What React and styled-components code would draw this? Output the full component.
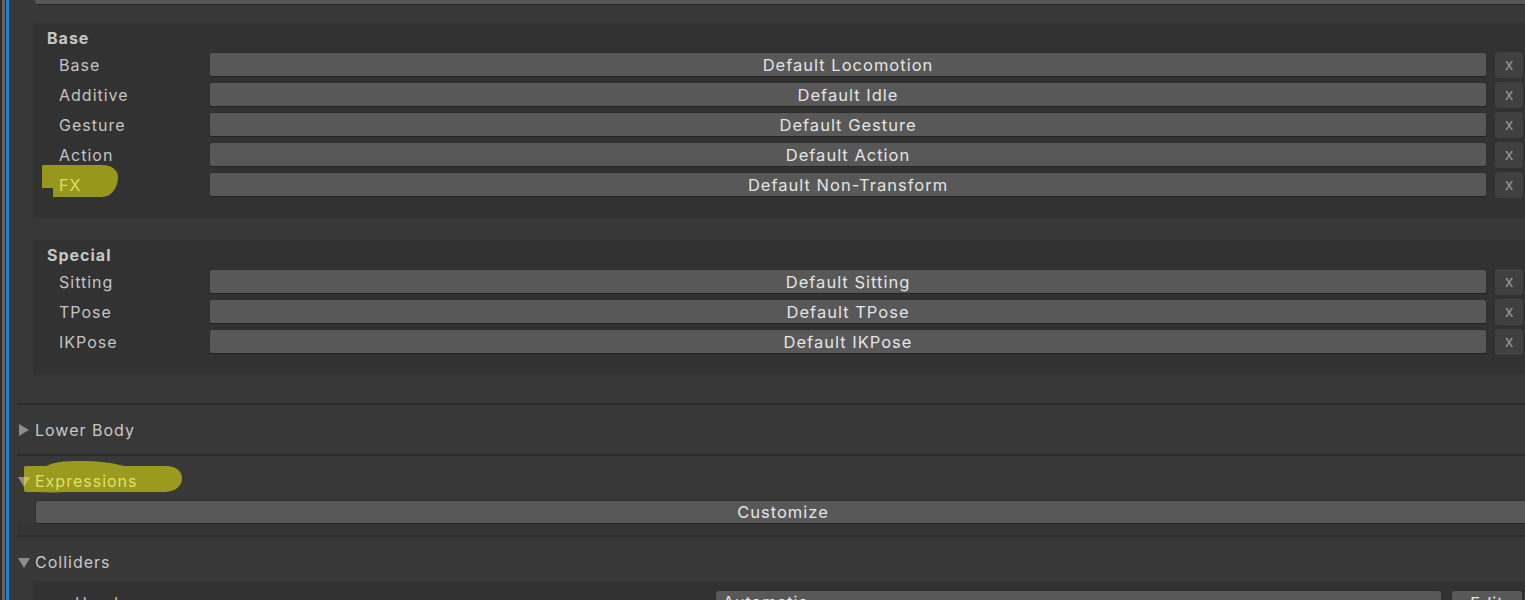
import React from "react";
import styled, { createGlobalStyle } from "styled-components";

const baseLayers = [
	{ label: "Base", value: "Default Locomotion" },
	{ label: "Additive", value: "Default Idle" },
	{ label: "Gesture", value: "Default Gesture" },
	{ label: "Action", value: "Default Action" },
	{ label: "FX", value: "Default Non-Transform", marked: true },
];

const specialLayers = [
	{ label: "Sitting", value: "Default Sitting" },
	{ label: "TPose", value: "Default TPose" },
	{ label: "IKPose", value: "Default IKPose" },
];

const Triangle = ({ open }) => (
	<Arrow viewBox="0 0 12 14" aria-hidden="true">
		{open ? (
			<polygon points="0,3 12,3 6,13" />
		) : (
			<polygon points="1,1 11,7 1,13" />
		)}
	</Arrow>
);

const LayerGroup = ({ title, layers }) => (
	<Group>
		<GroupTitle>{title}</GroupTitle>
		<Rows>
			{layers.map((layer) => (
				<LayerRow key={layer.label}>
					<LayerLabel>
						{layer.label}
						{layer.marked && (
							<Marker
								viewBox="0 0 76 32"
								style={{ left: -17, top: -10, width: 76, height: 32 }}
							>
								<path d="M0 1 Q0 0 2 0 H60 C70 0 76 5 76 12 C76 22 70 32 60 32 H11 V23 H0 Z" />
							</Marker>
						)}
					</LayerLabel>
					<FieldButton>{layer.value}</FieldButton>
					<ClearButton>x</ClearButton>
				</LayerRow>
			))}
		</Rows>
	</Group>
);

const App = () => {
	return (
		<>
			<GlobalStyle />
			<Window>
				<Edge />
				<Accent />
				<Inspector>
					<TopField />
					<LayerGroup title="Base" layers={baseLayers} />
					<LayerGroup title="Special" layers={specialLayers} />

					<Foldout $first>
						<FoldoutHeader>
							<Triangle />
							<span>Lower Body</span>
						</FoldoutHeader>
					</Foldout>

					<Foldout>
						<FoldoutHeader>
							<Triangle open />
							<span>Expressions</span>
							<Marker
								viewBox="0 0 158 32"
								style={{ left: 7, top: -10, width: 158, height: 32 }}
							>
								<path d="M0 6 Q0 5 4 5 H22 C30 1 40 0 55 0 C75 0 90 2 100 5 H142 C152 5 158 10 158 17 C158 26 150 31 140 31 H40 C30 32 20 31 10 31 H2 Q0 31 0 29 Z" />
							</Marker>
						</FoldoutHeader>
						<FoldoutBody>
							<WideButton>Customize</WideButton>
						</FoldoutBody>
					</Foldout>

					<Foldout>
						<FoldoutHeader>
							<Triangle open />
							<span>Colliders</span>
						</FoldoutHeader>
						<ColliderBox>
							<ColliderRow>
								<ColliderLabel>Head</ColliderLabel>
								<Dropdown>Automatic</Dropdown>
								<EditButton>Edit</EditButton>
							</ColliderRow>
						</ColliderBox>
					</Foldout>
				</Inspector>
			</Window>
		</>
	);
};

export default App;

const GlobalStyle = createGlobalStyle`
	html, body {
		margin: 0;
		padding: 0;
		background: #383838;
	}

	body {
		font-family: Inter, "Noto Sans", sans-serif;
		overflow: hidden;
	}
`;

const Window = styled.div`
	display: flex;
	align-items: flex-start;
	width: 1525px;
	height: 600px;
	overflow: hidden;
	background: #383838;
`;

const Edge = styled.div`
	flex: none;
	align-self: stretch;
	width: 6px;
	background: linear-gradient(
		to right,
		#2d2d2d 0 2px,
		#6a625a 2px 5px,
		#2d2d2d 5px 6px
	);
`;

const Accent = styled.div`
	flex: none;
	align-self: stretch;
	width: 3px;
	background: #1b84d4;
`;

const Inspector = styled.div`
	flex: none;
	width: 1522px;
`;

const TopField = styled.div`
	height: 4px;
	margin-left: 26px;
	background: #585858;
	border-bottom: 1px solid #262626;
	border-radius: 0 0 3px 3px;
`;

const Group = styled.section`
	margin: 18px 0 0 24px;
	padding: 5px 8px 21px 14px;
	background: #323232;

	& + & {
		margin-top: 22px;
	}
`;

const GroupTitle = styled.h4`
	margin: 0 0 4px;
	height: 20px;
	line-height: 20px;
	font-size: 16px;
	font-weight: 700;
	letter-spacing: 1px;
	color: #c6c6c6;
`;

const Rows = styled.div`
	display: flex;
	flex-direction: column;
	gap: 5px;
	padding-left: 12px;
`;

const LayerRow = styled.div`
	display: flex;
	align-items: center;
	height: 25px;
`;

const LayerLabel = styled.span`
	position: relative;
	flex: none;
	width: 150px;
	font-size: 16px;
	letter-spacing: 1px;
	color: #c4c4c4;
`;

const Marker = styled.svg`
	position: absolute;
	z-index: 2;
	pointer-events: none;
	fill: rgba(252, 252, 4, 0.5);
`;

const FieldButton = styled.button`
	flex: 1;
	height: 25px;
	padding: 0;
	box-sizing: border-box;
	background: #585858;
	border: 1px solid #2e2e2e;
	border-bottom-color: #232323;
	border-radius: 3px;
	font-family: inherit;
	font-size: 16.5px;
	letter-spacing: 1px;
	color: #e4e4e4;
`;

const ClearButton = styled.button`
	flex: none;
	width: 28px;
	height: 26px;
	margin-left: 8px;
	padding: 0 0 2px;
	background: #404040;
	border: none;
	border-radius: 3px;
	font-family: inherit;
	font-size: 16px;
	color: #999999;
`;

const Foldout = styled.div`
	position: relative;
	margin-left: 8px;
	border-top: 2px solid #2c2c2c;
	margin-top: ${(p) => (p.$first ? "28px" : "0")};
	padding-top: 15px;
`;

const FoldoutHeader = styled.div`
	position: relative;
	display: flex;
	align-items: center;
	gap: 5px;
	height: 20px;
	padding-left: 1px;
	padding-bottom: 14px;
	font-size: 16px;
	letter-spacing: 1px;
	color: #c8c8c8;

	&:not(:last-child) {
		padding-bottom: 0;
	}
`;

const Arrow = styled.svg`
	flex: none;
	width: 12px;
	height: 14px;
	fill: #8c8c8c;
`;

const FoldoutBody = styled.div`
	margin-top: 9px;
	padding-bottom: 11px;
	background: linear-gradient(to bottom, transparent 24px, #353535 24px);
`;

const WideButton = styled(FieldButton)`
	display: block;
	width: calc(100% - 18px);
	height: 24px;
	margin-left: 18px;
	border-radius: 3px 0 0 3px;
`;

const ColliderBox = styled.div`
	margin: 9px 0 0 16px;
	padding: 9px 8px 20px 42px;
	background: #323232;
`;

const ColliderRow = styled.div`
	display: flex;
	align-items: center;
	height: 25px;
`;

const ColliderLabel = styled.span`
	flex: none;
	width: 640px;
	font-size: 16px;
	letter-spacing: 1px;
	color: #c4c4c4;
`;

const Dropdown = styled.div`
	width: 727px;
	height: 25px;
	box-sizing: border-box;
	padding-left: 7px;
	line-height: 23px;
	background: #585858;
	border: 1px solid #2e2e2e;
	border-radius: 3px;
	font-size: 16px;
	letter-spacing: 1px;
	color: #e4e4e4;
`;

const EditButton = styled(FieldButton)`
	flex: none;
	width: 72px;
	margin-left: 9px;
`;
